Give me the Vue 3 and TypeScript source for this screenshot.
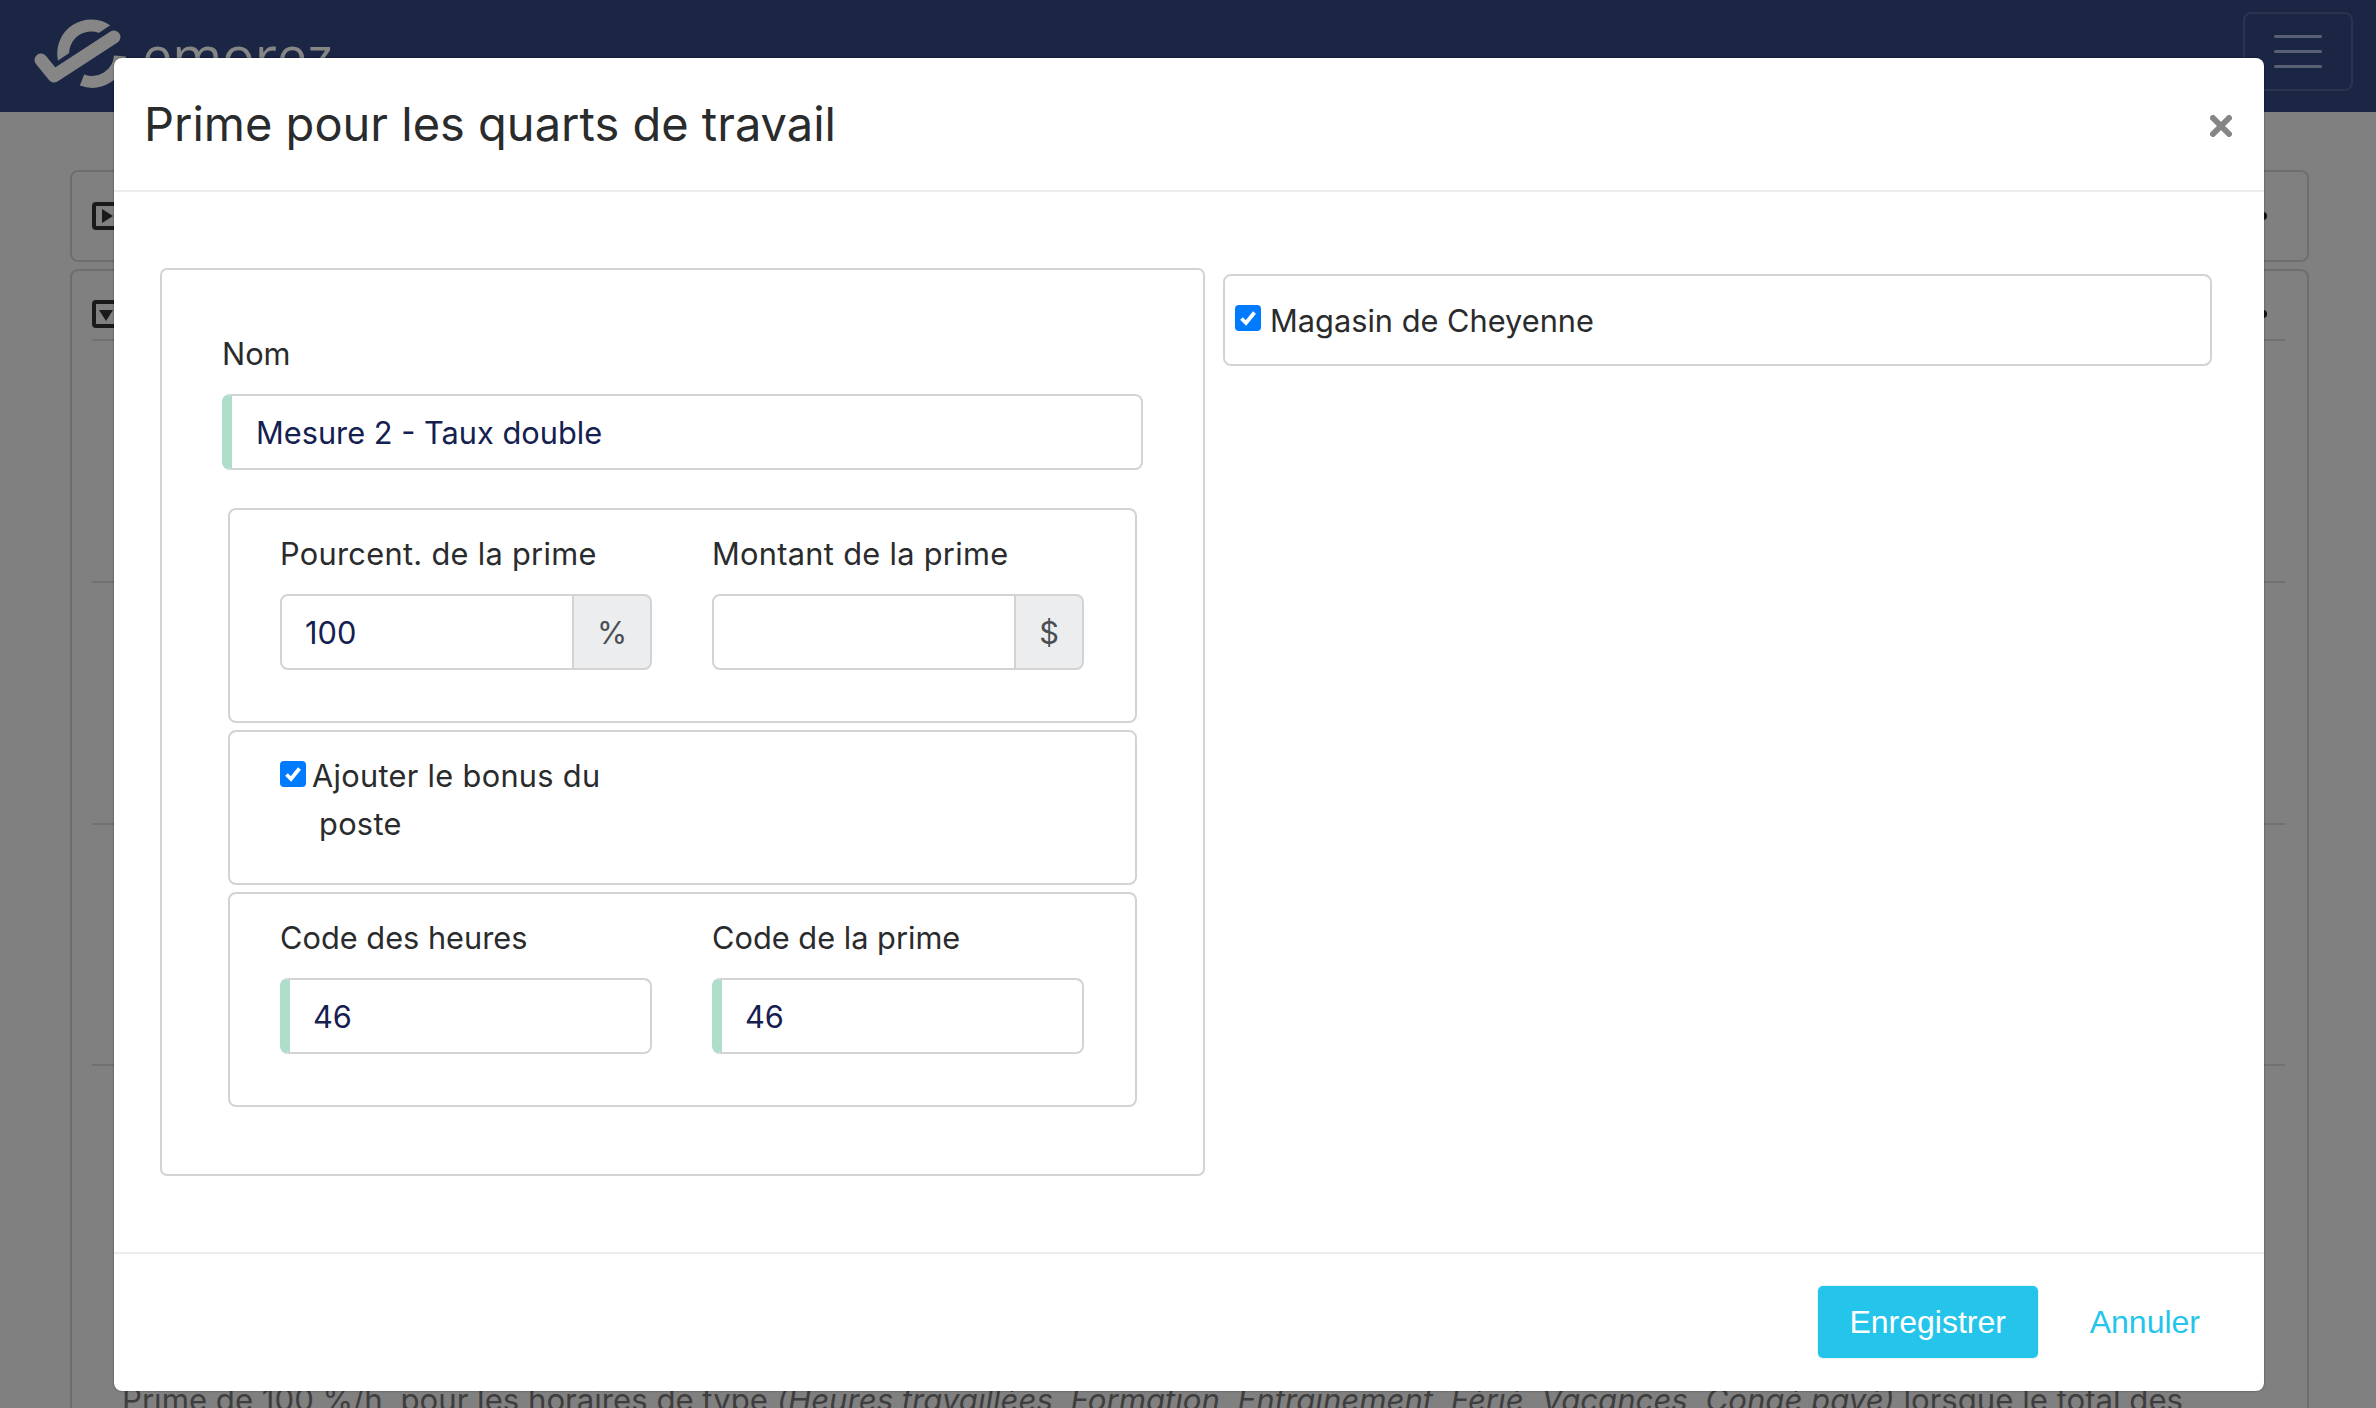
<script setup lang="ts">
const rows: number[] = [1, 2, 3, 4]
</script>

<template>
  <div class="page">
    <header class="nav">
      <div class="brand">
        <svg class="logo" width="100" height="80" viewBox="30 14 100 80" fill="none">
          <path d="M64 60 A28 28 0 0 1 108 31" stroke="#868686" stroke-width="12" />
          <path d="M82 80 A28 28 0 0 0 120 56" stroke="#868686" stroke-width="12" />
          <path d="M60 72 L122 30" stroke="#1b2544" stroke-width="21" />
          <path d="M41 60 L54 76 L114 37" stroke="#868686" stroke-width="13" stroke-linecap="round" stroke-linejoin="round" />
        </svg>
        <span class="brand-name">emorez</span>
      </div>
      <div class="burger"><i></i><i></i><i></i></div>
    </header>

    <main class="content">
      <section class="bg-card short">
        <span class="bg-icon"><b class="play"></b></span>
        <span class="bg-dot"></span>
      </section>
      <section class="bg-card tall">
        <div class="bg-head">
          <span class="bg-icon"><b class="down"></b></span>
          <span class="bg-dot"></span>
        </div>
        <div v-for="r in rows" :key="r" class="bg-row"></div>
        <p class="bg-text">Prime de 100 %/h, pour les horaires de type <em>(Heures travaillées, Formation, Entrainement, Férié, Vacances, Congé payé)</em> lorsque le total des</p>
      </section>
    </main>

    <div class="modal">
      <div class="modal-header">
        <h1>Prime pour les quarts de travail</h1>
        <svg class="close" width="22" height="22" viewBox="0 0 22 22" stroke="#868686" stroke-width="6" stroke-linecap="round">
          <path d="M3 3 L19 19 M19 3 L3 19" />
        </svg>
      </div>

      <div class="modal-body">
        <div class="form-card">
          <label class="lbl">Nom</label>
          <div class="input req wide">Mesure 2 - Taux double</div>

          <div class="inner first">
            <div class="grid">
              <div>
                <label class="lbl track">Pourcent. de la prime</label>
                <div class="group">
                  <div class="input plain">100</div>
                  <span class="addon pct">%</span>
                </div>
              </div>
              <div>
                <label class="lbl track">Montant de la prime</label>
                <div class="group">
                  <div class="input plain"></div>
                  <span class="addon dollar">$</span>
                </div>
              </div>
            </div>
          </div>

          <div class="inner check-card">
            <div class="check-label track">
              <span class="box"><svg width="18" height="18" viewBox="0 0 18 18" fill="none" stroke="#fff" stroke-width="3.8"><path d="M2.5 9.5 L7 14 L15.5 3.5" /></svg></span>Ajouter le bonus du poste
            </div>
          </div>

          <div class="inner last">
            <div class="grid">
              <div>
                <label class="lbl">Code des heures</label>
                <div class="input req">46</div>
              </div>
              <div>
                <label class="lbl">Code de la prime</label>
                <div class="input req">46</div>
              </div>
            </div>
          </div>
        </div>

        <div class="store-card">
          <span class="box store-box"><svg width="18" height="18" viewBox="0 0 18 18" fill="none" stroke="#fff" stroke-width="3.8"><path d="M2.5 9.5 L7 14 L15.5 3.5" /></svg></span>
          <span>Magasin de Cheyenne</span>
        </div>
      </div>

      <div class="modal-footer">
        <button class="save" type="button">Enregistrer</button>
        <button class="cancel" type="button">Annuler</button>
      </div>
    </div>
  </div>
</template>

<style>
html, body { margin: 0; padding: 0; background: #808080; }
</style>

<style scoped>
.page {
  position: relative;
  width: 2376px;
  height: 1408px;
  overflow: hidden;
  background: #808080;
  font-family: Inter, "Liberation Sans", sans-serif;
  font-size: 30.75px;
  color: #292b2d;
}
.nav {
  height: 112px;
  background: #1b2544;
  display: flex;
  align-items: flex-start;
  justify-content: space-between;
  box-sizing: border-box;
  padding: 12px 23px 0 30px;
}
.brand { display: flex; align-items: flex-start; gap: 12px; }
.logo { display: block; margin-top: 2px; }
.brand-name {
  font-family: "Open Sans", sans-serif;
  font-size: 54px;
  font-weight: 500;
  line-height: 72px;
  margin-top: 7px;
  color: #868686;
}
.burger {
  width: 110px;
  height: 79px;
  box-sizing: border-box;
  border: 2px solid #2a3350;
  border-radius: 8px;
  display: flex;
  flex-direction: column;
  align-items: center;
  justify-content: center;
  gap: 12px;
}
.burger i { display: block; width: 48px; height: 3px; border-radius: 2px; background: #5a6074; }

.content { padding: 58px 67px 0 70px; display: flex; flex-direction: column; gap: 7px; }
.bg-card { border: 2px solid #6e6e6e; border-radius: 8px; box-sizing: border-box; }
.short { height: 92px; display: flex; justify-content: space-between; padding: 30px 40px 0 20px; }
.tall { padding: 0 22px 0 20px; }
.bg-head { height: 68px; box-sizing: border-box; padding-top: 29px; display: flex; justify-content: space-between; padding-right: 18px; }
.bg-icon {
  width: 28px; height: 28px; box-sizing: border-box;
  border: 4px solid #1a1a1a; border-radius: 4px;
  display: flex; align-items: center; justify-content: center;
}
.play { border-left: 11px solid #1a1a1a; border-top: 7px solid transparent; border-bottom: 7px solid transparent; margin-left: 2px; }
.down { border-top: 11px solid #1a1a1a; border-left: 7px solid transparent; border-right: 7px solid transparent; margin-top: 2px; }
.bg-dot { width: 8px; height: 8px; border-radius: 50%; background: #111; margin-top: 10px; }
.bg-row { height: 241.75px; border-top: 2px solid #717171; box-sizing: border-box; }
.bg-text { margin: 72px 0 0; padding-left: 30px; font-size: 31.15px; line-height: 45px; white-space: nowrap; color: #3e3e3e; }

.modal {
  position: absolute;
  left: 114px;
  top: 58px;
  width: 2150px;
  height: 1333px;
  background: #fff;
  border-radius: 8px;
  display: flex;
  flex-direction: column;
  box-shadow: 0 0 2px rgba(0, 0, 0, 0.5);
}
.modal-header {
  height: 134px;
  box-sizing: border-box;
  border-bottom: 2px solid #ececec;
  display: flex;
  align-items: center;
  justify-content: space-between;
  padding: 0 32px 0 30px;
}
h1 { margin: 0; font-size: 47px; font-weight: 400; line-height: 68px; color: #292b2d; }
.close { display: block; margin-top: 3px; }

.modal-body {
  flex: 1;
  display: flex;
  align-items: flex-start;
  gap: 18px;
  padding: 76px 52px 0 46px;
}
.form-card {
  width: 1045px;
  height: 908px;
  box-sizing: border-box;
  border: 2px solid #d3d3d3;
  border-radius: 7px;
  padding: 61px 60px 0 60px;
}
.lbl { display: block; line-height: 45px; color: #292b2d; }
.track { letter-spacing: 0.3px; }
.input {
  height: 76px;
  box-sizing: border-box;
  border: 2px solid #d3d3d3;
  border-radius: 8px;
  background: #fff;
  color: #14204f;
  display: flex;
  align-items: center;
  padding-left: 23px;
}
.lbl + .input, .lbl + .group { margin-top: 18px; }
.req { border-left: 10px solid #aeddc9; padding-left: 23px; }
.wide { width: 921px; padding-left: 24px; }
.inner {
  margin: 7px 6px 0 6px;
  border: 2px solid #d3d3d3;
  border-radius: 8px;
  padding: 21px 50px 51px;
}
.first { margin-top: 38px; }
.grid { display: grid; grid-template-columns: 372px 372px; column-gap: 60px; }
.group { display: flex; }
.group .input { flex: 1; border-radius: 8px 0 0 8px; min-width: 0; }
.addon {
  height: 76px;
  box-sizing: border-box;
  border: 2px solid #d3d3d3;
  border-left: 0;
  border-radius: 0 8px 8px 0;
  background: #ecedef;
  color: #4a4f54;
  display: flex;
  align-items: center;
  justify-content: center;
}
.pct { width: 78px; }
.dollar { width: 68px; }
.check-card { padding: 20px 50px 0; height: 155px; box-sizing: border-box; }
.check-label { width: 370px; box-sizing: border-box; padding-left: 39px; line-height: 48px; }
.box {
  display: inline-flex;
  align-items: center;
  justify-content: center;
  width: 26px;
  height: 26px;
  border-radius: 4px;
  background: #007bff;
  vertical-align: 4px;
}
.check-label .box { margin: 0 6px 0 -39px; }
.store-box { margin-top: -5px; }
.store-card {
  flex: 1;
  margin-top: 6px;
  height: 92px;
  box-sizing: border-box;
  border: 2px solid #d3d3d3;
  border-radius: 8px;
  display: flex;
  align-items: center;
  gap: 9px;
  padding-left: 10px;
}
.modal-footer {
  height: 139px;
  box-sizing: border-box;
  border-top: 2px solid #ececec;
  display: flex;
  align-items: flex-start;
  justify-content: flex-end;
  padding: 32px 64px 0 0;
}
button {
  font-family: "Liberation Sans", sans-serif;
  font-size: 32px;
  height: 72px;
  border: 0;
  cursor: pointer;
}
.save {
  width: 220px;
  background: #25c5eb;
  color: #fff;
  border-radius: 5px;
  box-shadow: 0 0 0 1px #e3f6fb;
}
.cancel {
  background: transparent;
  color: #25c5eb;
  padding: 0;
  margin-left: 52px;
}
</style>
